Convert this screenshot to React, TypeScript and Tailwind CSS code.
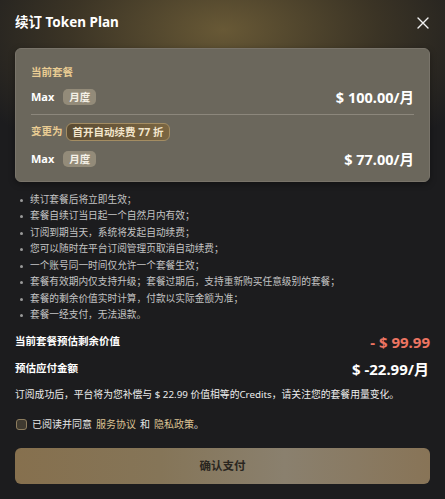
import React from "react";

const font = { fontFamily: '"Noto Sans", "Noto Sans CJK SC", sans-serif' };

const bullets = [
  "续订套餐后将立即生效；",
  "套餐自续订当日起一个自然月内有效；",
  "订阅到期当天，系统将发起自动续费；",
  "您可以随时在平台订阅管理页取消自动续费；",
  "一个账号同一时间仅允许一个套餐生效；",
  "套餐有效期内仅支持升级；套餐过期后，支持重新购买任意级别的套餐；",
  "套餐的剩余价值实时计算，付款以实际金额为准；",
  "套餐一经支付，无法退款。",
];

function Badge() {
  return (
    <span className="ml-[9px] inline-flex h-[16px] w-[33px] items-center justify-center rounded-[5px] bg-[#938b79] text-[10.5px] font-bold leading-none text-[#f4f0e6]">
      月度
    </span>
  );
}

export default function App() {
  return (
    <div
      className="relative h-[499px] w-[445px] overflow-hidden bg-[#1c1c1e] text-white"
      style={font}
    >
      <div className="pointer-events-none absolute left-1/2 top-[-120px] h-[300px] w-[560px] -translate-x-1/2 rounded-full bg-[radial-gradient(closest-side,rgba(108,92,55,0.95),rgba(80,68,42,0.6)_55%,rgba(28,28,30,0)_100%)]" />
      <div className="relative flex flex-col px-[15px]">
        <div className="flex h-[44px] items-center justify-between pt-[1px]">
          <span className="text-[13.5px] font-bold leading-none">续订 Token Plan</span>
          <svg width="12" height="12" viewBox="0 0 12 12" className="mr-[1px]">
            <path d="M1 1L11 11M11 1L1 11" stroke="#f2f2f2" strokeWidth="1.4" strokeLinecap="round" />
          </svg>
        </div>
        <div className="mt-[4px] box-border h-[134px] rounded-[6px] border border-[#79746a] bg-[#6b675c] px-[15px] pt-[15px] shadow-[0_2px_6px_rgba(0,0,0,0.35)]">
          <div className="flex h-[16px] items-center text-[10.5px] font-bold leading-none text-[#e9cc93]">
            当前套餐
          </div>
          <div className="mt-[7px] flex h-[20px] items-center justify-between">
            <div className="flex items-center">
              <span className="text-[11px] font-bold">Max</span>
              <Badge />
            </div>
            <span className="text-[14.5px] font-bold leading-none">$ 100.00/月</span>
          </div>
          <div className="mt-[7px] h-px bg-[#8c877c]" />
          <div className="mt-[8px] flex h-[18px] items-center">
            <span className="text-[10.5px] font-bold text-[#e9cc93]">变更为</span>
            <span className="ml-[3px] inline-flex h-[18px] items-center rounded-[6px] border border-[#a48d62] bg-[linear-gradient(90deg,#5a4b33,#7b6642)] px-[6px] text-[10.5px] font-bold leading-none text-[#f3e6cc]">
              首开自动续费 77 折
            </span>
          </div>
          <div className="mt-[8px] flex h-[20px] items-center justify-between">
            <div className="flex items-center">
              <span className="text-[11px] font-bold">Max</span>
              <Badge />
            </div>
            <span className="text-[14.5px] font-bold leading-none">$ 77.00/月</span>
          </div>
        </div>
        <ul className="mt-[10px] flex flex-col">
          {bullets.map((b) => (
            <li key={b} className="flex h-[16.5px] items-center text-[9.7px] text-[#c4c4c4]">
              <span className="ml-[5px] mr-[7px] h-[3px] w-[3px] shrink-0 rounded-full bg-[#9a9a9a]" />
              {b}
            </li>
          ))}
        </ul>
        <div className="mt-[8px] flex h-[20px] items-center justify-between">
          <span className="text-[10.5px] font-bold">当前套餐预估剩余价值</span>
          <span className="text-[15px] font-bold leading-none text-[#ec7462]">- $ 99.99</span>
        </div>
        <div className="mt-[7px] flex h-[20px] items-center justify-between">
          <span className="text-[10.5px] font-bold">预估应付金额</span>
          <span className="mr-[1px] text-[15px] font-bold leading-none">$ -22.99/月</span>
        </div>
        <div className="mt-[6px] flex h-[20px] items-center whitespace-nowrap text-[9.8px] text-[#ececec]">
          订阅成功后，平台将为您补偿与 $ 22.99 价值相等的Credits，请关注您的套餐用量变化。
        </div>
        <div className="mt-[9px] flex h-[20px] items-center text-[10px]">
          <span className="ml-[1px] mr-[5px] h-[11px] w-[11px] rounded-[3px] border border-[#8c7c5e] bg-[#3f3a30]" />
          <span className="text-[#e6e6e6]">已阅读并同意</span>
          <span className="ml-[4px] text-[#dcc394]">服务协议</span>
          <span className="mx-[4px] text-[#e6e6e6]">和</span>
          <span className="text-[#dcc394]">隐私政策</span>
          <span className="text-[#e6e6e6]">。</span>
        </div>
        <button className="mt-[14px] flex h-[36px] w-full items-center justify-center rounded-[6px] bg-[linear-gradient(90deg,#86704e_0%,#857558_35%,#8a806e_65%,#887457_100%)] text-[11.5px] font-bold text-[#2a261f]">
          确认支付
        </button>
      </div>
    </div>
  );
}
